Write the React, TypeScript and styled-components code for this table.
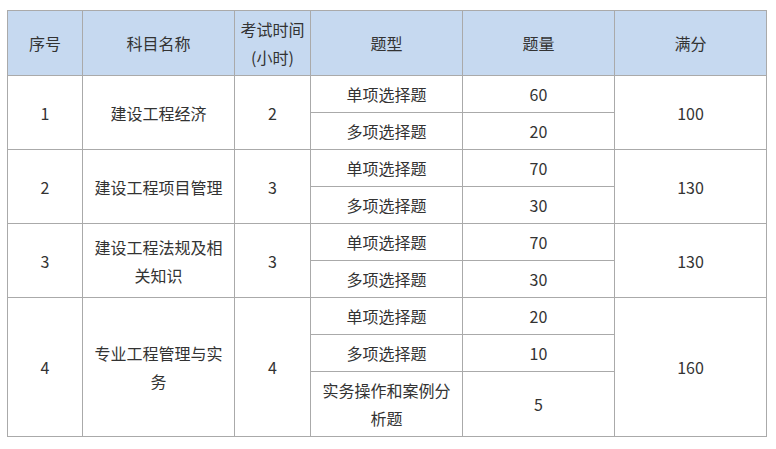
import React from "react";
import styled, { createGlobalStyle } from "styled-components";

const Global = createGlobalStyle`
  html, body { margin: 0; padding: 0; background: #ffffff; }
  body { font-family: "Noto Sans CJK SC", "Noto Sans", sans-serif; }
`;

const Wrap = styled.div`
  padding: 10px 0 0 7px;
`;

const Table = styled.table`
  border-collapse: collapse;
  table-layout: fixed;
  width: 760px;
  color: #333333;
  font-size: 16px;
  line-height: 28px;
`;

const HeadRow = styled.tr`
  height: 65px;
  background: #c6d9f0;
`;

const Row = styled.tr<{ $h?: number }>`
  height: ${(p) => p.$h ?? 37}px;
`;

const Cell = styled.td`
  border: 1px solid #aaaaaa;
  text-align: center;
  vertical-align: middle;
  padding: 4px 8px;
  font-weight: 400;
  word-break: break-all;
`;

const HeadCell = styled(Cell).attrs({ as: "th" })`
  padding: 4px 2px;
`;

type Sub = { type: string; count: string; h?: number };
type Group = { no: string; name: string; hours: string; total: string; subs: Sub[] };

const data: Group[] = [
  { no: "1", name: "建设工程经济", hours: "2", total: "100", subs: [{ type: "单项选择题", count: "60" }, { type: "多项选择题", count: "20" }] },
  { no: "2", name: "建设工程项目管理", hours: "3", total: "130", subs: [{ type: "单项选择题", count: "70" }, { type: "多项选择题", count: "30" }] },
  { no: "3", name: "建设工程法规及相关知识", hours: "3", total: "130", subs: [{ type: "单项选择题", count: "70" }, { type: "多项选择题", count: "30" }] },
  {
    no: "4", name: "专业工程管理与实务", hours: "4", total: "160",
    subs: [{ type: "单项选择题", count: "20" }, { type: "多项选择题", count: "10" }, { type: "实务操作和案例分析题", count: "5", h: 65 }],
  },
];

export default function App() {
  return (
    <>
      <Global />
      <Wrap>
        <Table>
          <colgroup>
            <col style={{ width: 75 }} />
            <col style={{ width: 152 }} />
            <col style={{ width: 76 }} />
            <col style={{ width: 152 }} />
            <col style={{ width: 152 }} />
            <col style={{ width: 152 }} />
          </colgroup>
          <thead>
            <HeadRow>
              <HeadCell>序号</HeadCell>
              <HeadCell>科目名称</HeadCell>
              <HeadCell>
                考试时间
                <br />
                (小时)
              </HeadCell>
              <HeadCell>题型</HeadCell>
              <HeadCell>题量</HeadCell>
              <HeadCell>满分</HeadCell>
            </HeadRow>
          </thead>
          <tbody>
            {data.map((g) =>
              g.subs.map((s, i) => (
                <Row key={g.no + i} $h={s.h}>
                  {i === 0 && (
                    <>
                      <Cell rowSpan={g.subs.length}>{g.no}</Cell>
                      <Cell rowSpan={g.subs.length}>{g.name}</Cell>
                      <Cell rowSpan={g.subs.length}>{g.hours}</Cell>
                    </>
                  )}
                  <Cell>{s.type}</Cell>
                  <Cell>{s.count}</Cell>
                  {i === 0 && <Cell rowSpan={g.subs.length}>{g.total}</Cell>}
                </Row>
              ))
            )}
          </tbody>
        </Table>
      </Wrap>
    </>
  );
}
